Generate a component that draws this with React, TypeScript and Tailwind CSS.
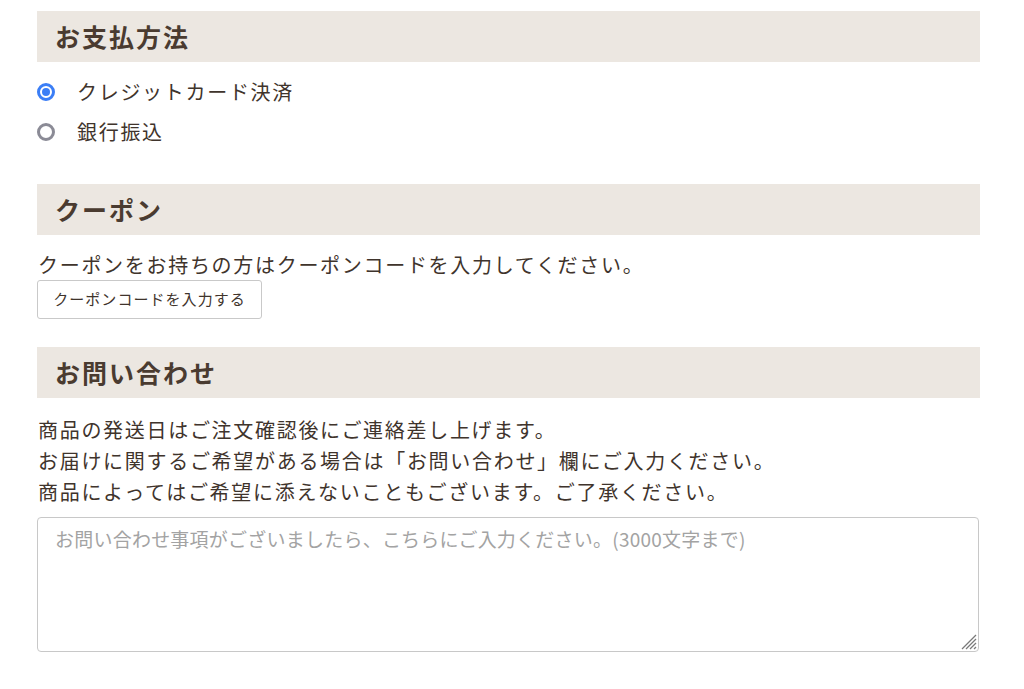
import React from 'react';

const Heading: React.FC<{ title: string }> = ({ title }) => (
  <div className="flex h-[51px] items-center bg-[#ece7e1] pl-[18px]">
    <h2 className="text-[25px] font-bold tracking-[0.08em] text-[#4a3b30]">{title}</h2>
  </div>
);

const Radio: React.FC<{ checked?: boolean; label: string }> = ({ checked, label }) => (
  <label className="flex h-[40px] items-center gap-[22px]">
    {checked ? (
      <span className="flex h-[18px] w-[18px] items-center justify-center rounded-full border-[3px] border-[#3b7ef6] bg-white">
        <span className="h-[8px] w-[8px] rounded-full bg-[#3b7ef6]" />
      </span>
    ) : (
      <span className="h-[18px] w-[18px] rounded-full border-[3px] border-[#8b8b96] bg-white" />
    )}
    <span className="text-[20px] tracking-[0.085em] text-[#3f342c]">{label}</span>
  </label>
);

export default function App() {
  return (
    <div className="min-h-screen bg-white font-['Noto_Sans_CJK_JP',sans-serif]">
      <div className="ml-[37px] w-[943px] pt-[11px]">
        <Heading title="お支払方法" />
        <div className="mt-[10px] flex flex-col">
          <Radio checked label="クレジットカード決済" />
          <Radio label="銀行振込" />
        </div>

        <div className="mt-[32px]">
          <Heading title="クーポン" />
        </div>
        <p className="mt-[15px] pl-px text-[20px] leading-[30px] tracking-[0.085em] text-[#3f342c]">
          クーポンをお持ちの方はクーポンコードを入力してください。
        </p>
        <button className="flex h-[39px] w-[225px] items-center justify-center rounded-[3px] border border-[#c9c9c9] bg-white text-[15px] tracking-[0.07em] text-[#3f342c]">
          クーポンコードを入力する
        </button>

        <div className="mt-[28px]">
          <Heading title="お問い合わせ" />
        </div>
        <div className="mt-[16px] pl-px text-[20px] leading-[31px] tracking-[0.085em] text-[#3f342c]">
          <p>商品の発送日はご注文確認後にご連絡差し上げます。</p>
          <p>お届けに関するご希望がある場合は「お問い合わせ」欄にご入力ください。</p>
          <p>商品によってはご希望に添えないこともございます。ご了承ください。</p>
        </div>

        <div className="relative mt-[10px] w-[942px]">
          <textarea
            className="block h-[135px] w-full resize-none rounded-[4px] border border-[#c8c8c8] px-[17px] py-[8px] text-[19px] leading-[26px] tracking-[0.012em] text-[#3f342c] outline-none placeholder:text-[#a3a3a3]"
            placeholder="お問い合わせ事項がございましたら、こちらにご入力ください。(3000文字まで)"
          />
          <svg className="absolute bottom-[2px] right-[2px]" width="16" height="16" viewBox="0 0 16 16">
            <g stroke="#7a7a7a" strokeWidth="1.2">
              <line x1="15" y1="1" x2="1" y2="15" />
              <line x1="15" y1="5" x2="5" y2="15" />
              <line x1="15" y1="9" x2="9" y2="15" />
              <line x1="15" y1="13" x2="13" y2="15" />
            </g>
          </svg>
        </div>
      </div>
    </div>
  );
}
